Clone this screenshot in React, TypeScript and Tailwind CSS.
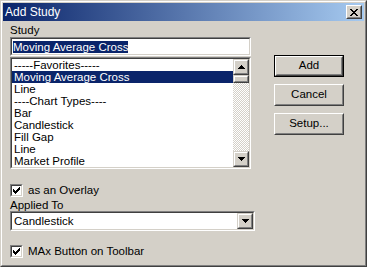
import React from "react";

function Pix({ rows, color = "#000" }: { rows: string[]; color?: string }) {
  const w = rows[0].length;
  const h = rows.length;
  const rects: React.ReactNode[] = [];
  rows.forEach((r, y) =>
    r.split("").forEach((c, x) => {
      if (c === "X") rects.push(<rect key={`${x}-${y}`} x={x} y={y} width={1} height={1} fill={color} />);
    })
  );
  return (
    <svg width={w} height={h} viewBox={`0 0 ${w} ${h}`} shapeRendering="crispEdges" className="block">
      {rects}
    </svg>
  );
}

const UP = ["...X...", "..XXX..", ".XXXXX.", "XXXXXXX"];
const DOWN = ["XXXXXXX", ".XXXXX.", "..XXX..", "...X..."];
const CLOSE = ["XX....XX", ".XX..XX.", "..XXXX..", "...XX...", "..XXXX..", ".XX..XX.", "XX....XX"];
const CHECK = ["......X", ".....XX", "X...XXX", "XX.XXX.", "XXXXX..", ".XXX...", "..X...."];

function Sunken({ className = "", inner = "", children }: { className?: string; inner?: string; children?: React.ReactNode }) {
  return (
    <div className={`border border-t-[#808080] border-l-[#808080] border-r-white border-b-white ${className}`}>
      <div className={`h-full border border-t-[#404040] border-l-[#404040] border-r-[#d4d0c8] border-b-[#d4d0c8] ${inner}`}>
        {children}
      </div>
    </div>
  );
}

function ScrollBtn({ children, className = "" }: { children?: React.ReactNode; className?: string }) {
  return (
    <div className={`border border-t-[#d4d0c8] border-l-[#d4d0c8] border-r-[#404040] border-b-[#404040] bg-[#d4d0c8] ${className}`}>
      <div className="h-full border border-t-white border-l-white border-r-[#808080] border-b-[#808080] flex items-center justify-center">
        {children}
      </div>
    </div>
  );
}

function Button({ label, def = false }: { label: string; def?: boolean }) {
  if (def) {
    return (
      <div className="h-[22px] w-[70px] border border-black">
        <div className="h-full border border-t-white border-l-white border-r-[#404040] border-b-[#404040]">
          <div className="h-full border border-t-[#d4d0c8] border-l-[#d4d0c8] border-r-[#808080] border-b-[#808080] flex items-center justify-center text-black">
            {label}
          </div>
        </div>
      </div>
    );
  }
  return (
    <div className="h-[22px] w-[70px] border border-t-white border-l-white border-r-[#404040] border-b-[#404040]">
      <div className="h-full border border-t-[#d4d0c8] border-l-[#d4d0c8] border-r-[#808080] border-b-[#808080] flex items-center justify-center text-black">
        {label}
      </div>
    </div>
  );
}

function Checkbox({ label }: { label: string }) {
  return (
    <div className="flex items-center h-[13px]">
      <Sunken className="w-[13px] h-[13px]" inner="bg-white flex items-center justify-center">
        <Pix rows={CHECK} />
      </Sunken>
      <span className="ml-[5px] leading-[13px]">{label}</span>
    </div>
  );
}

const ITEMS = [
  "-----Favorites-----",
  "Moving Average Cross",
  "Line",
  "----Chart Types----",
  "Bar",
  "Candlestick",
  "Fill Gap",
  "Line",
  "Market Profile",
];

export default function App() {
  return (
    <div className="w-[367px] h-[267px] font-['Liberation_Sans',Arial,sans-serif] text-[11.5px] text-black select-none">
      <div className="h-full border border-t-[#d4d0c8] border-l-[#d4d0c8] border-r-[#404040] border-b-[#404040] bg-[#d4d0c8]">
        <div className="h-full border border-t-white border-l-white border-r-[#808080] border-b-[#808080] p-[1px] flex flex-col">
          {/* Title bar */}
          <div className="h-[18px] flex items-center bg-[linear-gradient(to_right,#0a246a,#a6caf0)] pl-[2px] pr-[2px]">
            <span className="text-white text-[12px] leading-[18px] flex-1">Add Study</span>
            <div className="w-[16px] h-[14px] border border-t-white border-l-white border-r-[#404040] border-b-[#404040] bg-[#d4d0c8]">
              <div className="h-full border border-t-[#d4d0c8] border-l-[#d4d0c8] border-r-[#808080] border-b-[#808080] flex items-center justify-center">
                <Pix rows={CLOSE} />
              </div>
            </div>
          </div>

          {/* Body */}
          <div className="flex flex-1 pl-[7px]">
            <div className="w-[245px] flex flex-col">
              <div className="h-[16px] pt-[3px] leading-[13px]">Study</div>
              <Sunken className="w-[241px] h-[19px]" inner="bg-white pl-[1px] flex items-center">
                <span className="bg-[#0a246a] text-white leading-[12px] h-[12px]">Moving Average Cross</span>
              </Sunken>
              <Sunken className="w-[241px] h-[112px] mt-[1px]" inner="bg-white flex">
                <div className="flex-1 flex flex-col">
                  {ITEMS.map((it, i) => (
                    <div
                      key={i}
                      className={`h-[12px] leading-[12px] pl-[2px] whitespace-nowrap ${i === 1 ? "bg-[#0a246a] text-white" : ""}`}
                    >
                      {it}
                    </div>
                  ))}
                </div>
                <div className="w-[16px] flex flex-col bg-[repeating-conic-gradient(#d4d0c8_0%_25%,#ffffff_0%_50%)] bg-[length:2px_2px]">
                  <ScrollBtn className="h-[16px]">
                    <Pix rows={UP} />
                  </ScrollBtn>
                  <ScrollBtn className="h-[8px]" />
                  <div className="flex-1" />
                  <ScrollBtn className="h-[16px]">
                    <Pix rows={DOWN} />
                  </ScrollBtn>
                </div>
              </Sunken>
              <div className="mt-[15px]">
                <Checkbox label="as an Overlay" />
              </div>
              <div className="h-[14px] pt-[2px] leading-[12px]">Applied To</div>
              <Sunken className="w-[245px] h-[20px]" inner="bg-white flex items-center">
                <span className="flex-1 pl-[2px] leading-[14px]">Candlestick</span>
                <ScrollBtn className="w-[16px] h-[16px]">
                  <Pix rows={DOWN} />
                </ScrollBtn>
              </Sunken>
              <div className="mt-[14px]">
                <Checkbox label="MAx Button on Toolbar" />
              </div>
            </div>
            <div className="ml-[19px] mt-[34px] flex flex-col gap-[7px]">
              <Button label="Add" def />
              <Button label="Cancel" />
              <Button label="Setup..." />
            </div>
          </div>
        </div>
      </div>
    </div>
  );
}
